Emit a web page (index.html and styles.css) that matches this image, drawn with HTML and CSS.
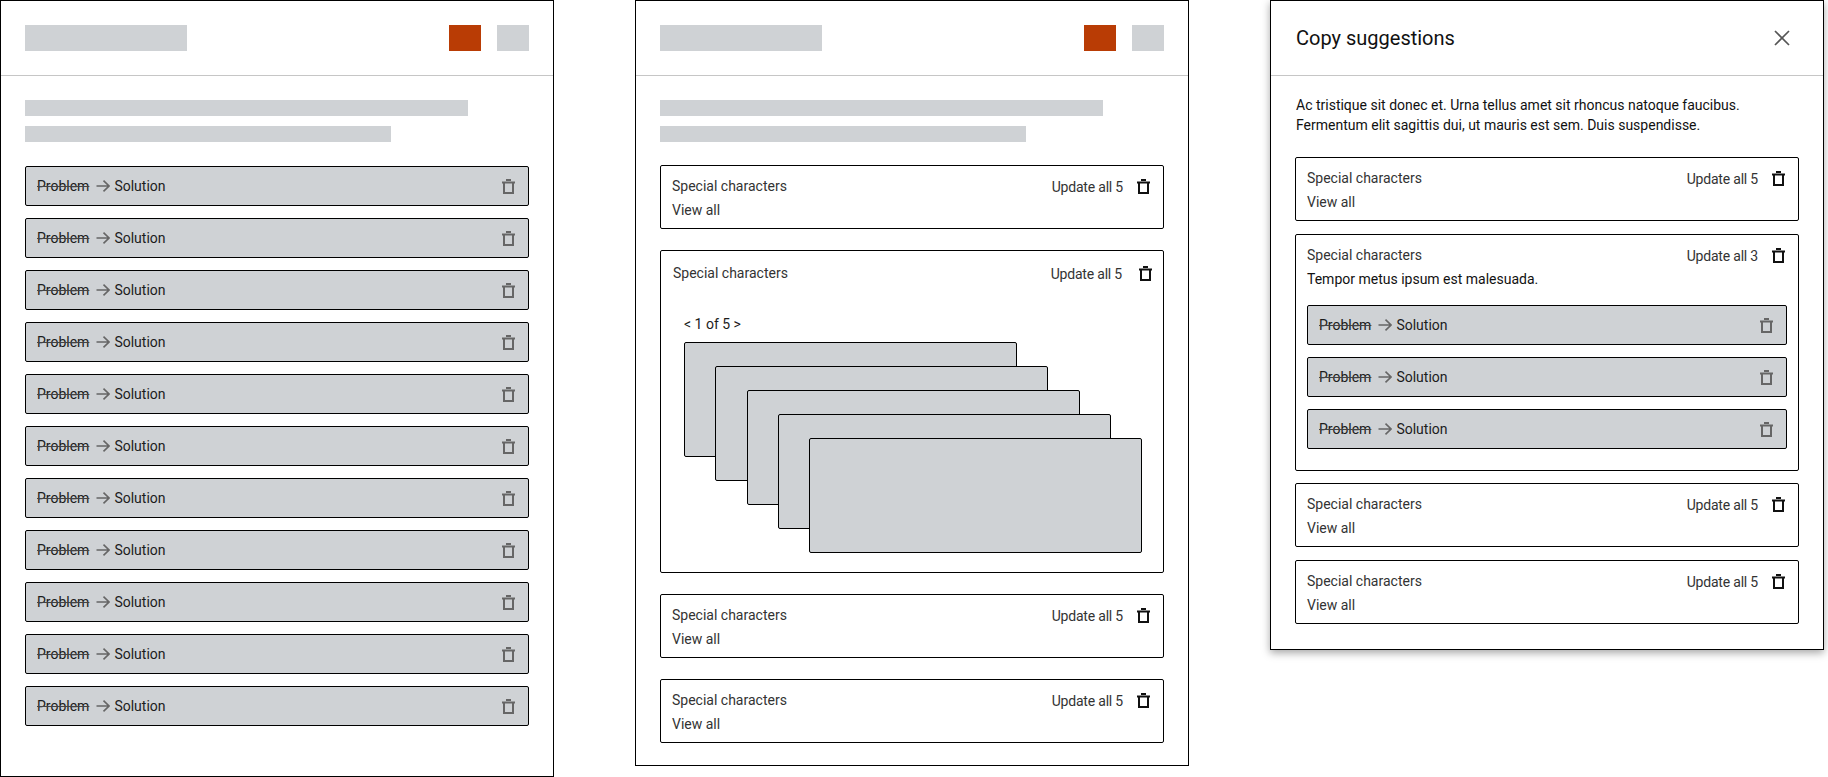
FILE: index.html
```html
<!DOCTYPE html>
<html lang="en">

<head>
    <meta charset="UTF-8">
    <title>Copy suggestions wireframes</title>
    <link rel="stylesheet" href="styles.css">
</head>

<body>
    <svg class="defs" width="0" height="0">
        <symbol id="trash" viewBox="0 0 13 15">
            <path d="M4 1h5M0 3.5h13M2 3.5V14h9V3.5" fill="none" stroke="currentColor" stroke-width="2" />
        </symbol>
        <symbol id="arrow" viewBox="0 0 14 12">
            <path d="M0.5 6h12.5M7.5 0.7L13 6l-5.5 5.3" fill="none" stroke="currentColor" stroke-width="1.6" />
        </symbol>
    </svg>

    <!-- flat list -->
    <div class="panel panel-list">
        <div class="panel-header">
            <div class="ph-title"></div>
            <div class="ph-btn ph-primary"></div>
            <div class="ph-btn"></div>
        </div>
        <div class="panel-body">
            <div class="ph-line ph-line-long"></div>
            <div class="ph-line ph-line-short"></div>
            <div class="rows">
                <div class="row"><s>Problem</s><svg class="arrow"><use href="#arrow" /></svg><span>Solution</span><svg class="trash"><use href="#trash" /></svg></div>
                <div class="row"><s>Problem</s><svg class="arrow"><use href="#arrow" /></svg><span>Solution</span><svg class="trash"><use href="#trash" /></svg></div>
                <div class="row"><s>Problem</s><svg class="arrow"><use href="#arrow" /></svg><span>Solution</span><svg class="trash"><use href="#trash" /></svg></div>
                <div class="row"><s>Problem</s><svg class="arrow"><use href="#arrow" /></svg><span>Solution</span><svg class="trash"><use href="#trash" /></svg></div>
                <div class="row"><s>Problem</s><svg class="arrow"><use href="#arrow" /></svg><span>Solution</span><svg class="trash"><use href="#trash" /></svg></div>
                <div class="row"><s>Problem</s><svg class="arrow"><use href="#arrow" /></svg><span>Solution</span><svg class="trash"><use href="#trash" /></svg></div>
                <div class="row"><s>Problem</s><svg class="arrow"><use href="#arrow" /></svg><span>Solution</span><svg class="trash"><use href="#trash" /></svg></div>
                <div class="row"><s>Problem</s><svg class="arrow"><use href="#arrow" /></svg><span>Solution</span><svg class="trash"><use href="#trash" /></svg></div>
                <div class="row"><s>Problem</s><svg class="arrow"><use href="#arrow" /></svg><span>Solution</span><svg class="trash"><use href="#trash" /></svg></div>
                <div class="row"><s>Problem</s><svg class="arrow"><use href="#arrow" /></svg><span>Solution</span><svg class="trash"><use href="#trash" /></svg></div>
                <div class="row"><s>Problem</s><svg class="arrow"><use href="#arrow" /></svg><span>Solution</span><svg class="trash"><use href="#trash" /></svg></div>
            </div>
        </div>
    </div>

    <!-- carousel variant -->
    <div class="panel panel-stack">
        <div class="panel-header">
            <div class="ph-title"></div>
            <div class="ph-btn ph-primary"></div>
            <div class="ph-btn"></div>
        </div>
        <div class="panel-body">
            <div class="ph-line ph-line-long"></div>
            <div class="ph-line ph-line-short"></div>
            <div class="cards">
                <div class="card">
                    <div class="card-top">
                        <span class="card-name">Special characters</span>
                        <span class="card-update">Update all 5</span>
                        <svg class="trash"><use href="#trash" /></svg>
                    </div>
                    <div class="card-sub">View all</div>
                </div>
                <div class="card card-open">
                    <div class="card-top">
                        <span class="card-name">Special characters</span>
                        <span class="card-update">Update all 5</span>
                        <svg class="trash"><use href="#trash" /></svg>
                    </div>
                    <div class="pager">&lt; 1 of 5 &gt;</div>
                    <div class="sheets">
                        <div class="sheet sheet-1"></div>
                        <div class="sheet sheet-2"></div>
                        <div class="sheet sheet-3"></div>
                        <div class="sheet sheet-4"></div>
                        <div class="sheet sheet-5"></div>
                    </div>
                </div>
                <div class="card">
                    <div class="card-top">
                        <span class="card-name">Special characters</span>
                        <span class="card-update">Update all 5</span>
                        <svg class="trash"><use href="#trash" /></svg>
                    </div>
                    <div class="card-sub">View all</div>
                </div>
                <div class="card">
                    <div class="card-top">
                        <span class="card-name">Special characters</span>
                        <span class="card-update">Update all 5</span>
                        <svg class="trash"><use href="#trash" /></svg>
                    </div>
                    <div class="card-sub">View all</div>
                </div>
            </div>
        </div>
    </div>

    <!-- drawer variant -->
    <div class="panel panel-drawer">
        <div class="panel-header">
            <h1 class="drawer-title">Copy suggestions</h1>
            <svg class="close" viewBox="0 0 16 16">
                <path d="M1 1l14 14M15 1L1 15" fill="none" stroke="currentColor" stroke-width="1.7" />
            </svg>
        </div>
        <div class="panel-body">
            <p class="intro">Ac tristique sit donec et. Urna tellus amet sit rhoncus natoque faucibus.<br>Fermentum elit sagittis dui, ut mauris est sem. Duis suspendisse.</p>
            <div class="cards">
                <div class="card">
                    <div class="card-top">
                        <span class="card-name">Special characters</span>
                        <span class="card-update">Update all 5</span>
                        <svg class="trash"><use href="#trash" /></svg>
                    </div>
                    <div class="card-sub">View all</div>
                </div>
                <div class="card card-expanded">
                    <div class="card-top">
                        <span class="card-name">Special characters</span>
                        <span class="card-update">Update all 3</span>
                        <svg class="trash"><use href="#trash" /></svg>
                    </div>
                    <div class="card-sub">Tempor metus ipsum est malesuada.</div>
                    <div class="rows">
                        <div class="row"><s>Problem</s><svg class="arrow"><use href="#arrow" /></svg><span>Solution</span><svg class="trash"><use href="#trash" /></svg></div>
                        <div class="row"><s>Problem</s><svg class="arrow"><use href="#arrow" /></svg><span>Solution</span><svg class="trash"><use href="#trash" /></svg></div>
                        <div class="row"><s>Problem</s><svg class="arrow"><use href="#arrow" /></svg><span>Solution</span><svg class="trash"><use href="#trash" /></svg></div>
                    </div>
                </div>
                <div class="card">
                    <div class="card-top">
                        <span class="card-name">Special characters</span>
                        <span class="card-update">Update all 5</span>
                        <svg class="trash"><use href="#trash" /></svg>
                    </div>
                    <div class="card-sub">View all</div>
                </div>
                <div class="card">
                    <div class="card-top">
                        <span class="card-name">Special characters</span>
                        <span class="card-update">Update all 5</span>
                        <svg class="trash"><use href="#trash" /></svg>
                    </div>
                    <div class="card-sub">View all</div>
                </div>
            </div>
        </div>
    </div>
</body>

</html>
```

FILE: styles.css
```css
* {
    box-sizing: border-box;
}

body {
    margin: 0;
    display: flex;
    align-items: flex-start;
    gap: 81px;
    background: white;
    color: #1c1c1c;
    font-family: Roboto, "Liberation Sans", sans-serif;
    font-size: 14px;
    line-height: 20px;
}

.defs {
    position: absolute;
}

.panel {
    width: 554px;
    flex: none;
    background: white;
    border: 1px solid black;
}

.panel-list {
    height: 777px;
}

.panel-stack {
    height: 766px;
}

.panel-drawer {
    height: 650px;
    box-shadow: 0 3px 8px rgba(0, 0, 0, 0.35);
}

.panel-header {
    display: flex;
    align-items: center;
    height: 75px;
    padding: 0 24px;
    border-bottom: 1px solid #c6c6c6;
}

.ph-title {
    width: 162px;
    height: 26px;
    margin-right: auto;
    background: #cfd2d5;
}

.ph-btn {
    width: 32px;
    height: 26px;
    margin-left: 16px;
    background: #cfd2d5;
}

.ph-primary {
    background: #b93c05;
}

.panel-body {
    padding: 24px 24px 0;
}

.ph-line {
    height: 16px;
    margin-bottom: 10px;
    background: #cfd2d5;
}

.ph-line-long {
    width: 443px;
}

.ph-line-short {
    width: 366px;
    margin-bottom: 24px;
}

.rows {
    display: flex;
    flex-direction: column;
    gap: 12px;
}

.row {
    display: flex;
    align-items: center;
    height: 40px;
    padding: 0 13px 0 11px;
    background: #cfd2d5;
    border: 1px solid black;
    border-radius: 2px;
}

.row s {
    text-decoration-color: #444;
}

.arrow {
    width: 14px;
    height: 12px;
    margin: 0 4px 0 7px;
    color: #666;
}

.trash {
    width: 13px;
    height: 15px;
    flex: none;
}

.row .trash {
    margin-left: auto;
    color: #666;
}

.cards {
    display: flex;
    flex-direction: column;
    gap: 21px;
    margin-top: -1px;
}

.card {
    height: 64px;
    padding: 9px 13px 9px 11px;
    border: 1px solid black;
    border-radius: 2px;
}

.card-top {
    display: flex;
    align-items: center;
}

.card-name {
    margin-right: auto;
    color: #333;
}

.card-update {
    margin: 2px 14px 0 0;
    color: #333;
    letter-spacing: -0.2px;
}

.card-top .trash {
    color: #111;
}

.card-sub {
    margin-top: 3px;
    color: #333;
}

.card-open {
    height: 323px;
    padding: 11px 11px 0 12px;
}

.card-open .card-update {
    margin-right: 17px;
}

.pager {
    margin: 30px 0 8px 11px;
}

.sheets {
    position: relative;
    height: 211px;
}

/* overlapping pile, each sheet offset from the one behind */
.sheet {
    position: absolute;
    width: 333px;
    height: 115px;
    background: #cfd2d5;
    border: 1px solid black;
    border-radius: 2px;
}

.sheet-1 {
    left: 11px;
    top: 0;
}

.sheet-2 {
    left: 42px;
    top: 24px;
}

.sheet-3 {
    left: 74px;
    top: 48px;
}

.sheet-4 {
    left: 105px;
    top: 72px;
}

.sheet-5 {
    left: 136px;
    top: 96px;
}

.drawer-title {
    margin: 0 auto 0 1px;
    font-size: 20px;
    font-weight: 400;
    line-height: 28px;
    color: #111;
}

.close {
    width: 16px;
    height: 16px;
    margin-right: 9px;
    color: #555;
}

.panel-drawer .panel-body {
    padding-top: 19px;
}

.intro {
    margin: 0 0 22px 1px;
    color: #111;
}

.panel-drawer .cards {
    gap: 13px;
    margin-top: 0;
}

.card-expanded {
    height: 237px;
    margin-bottom: -1px;
}

.card-expanded .card-sub {
    color: #111;
}

.card-expanded .rows {
    margin: 16px -2px 0 0;
}
```
